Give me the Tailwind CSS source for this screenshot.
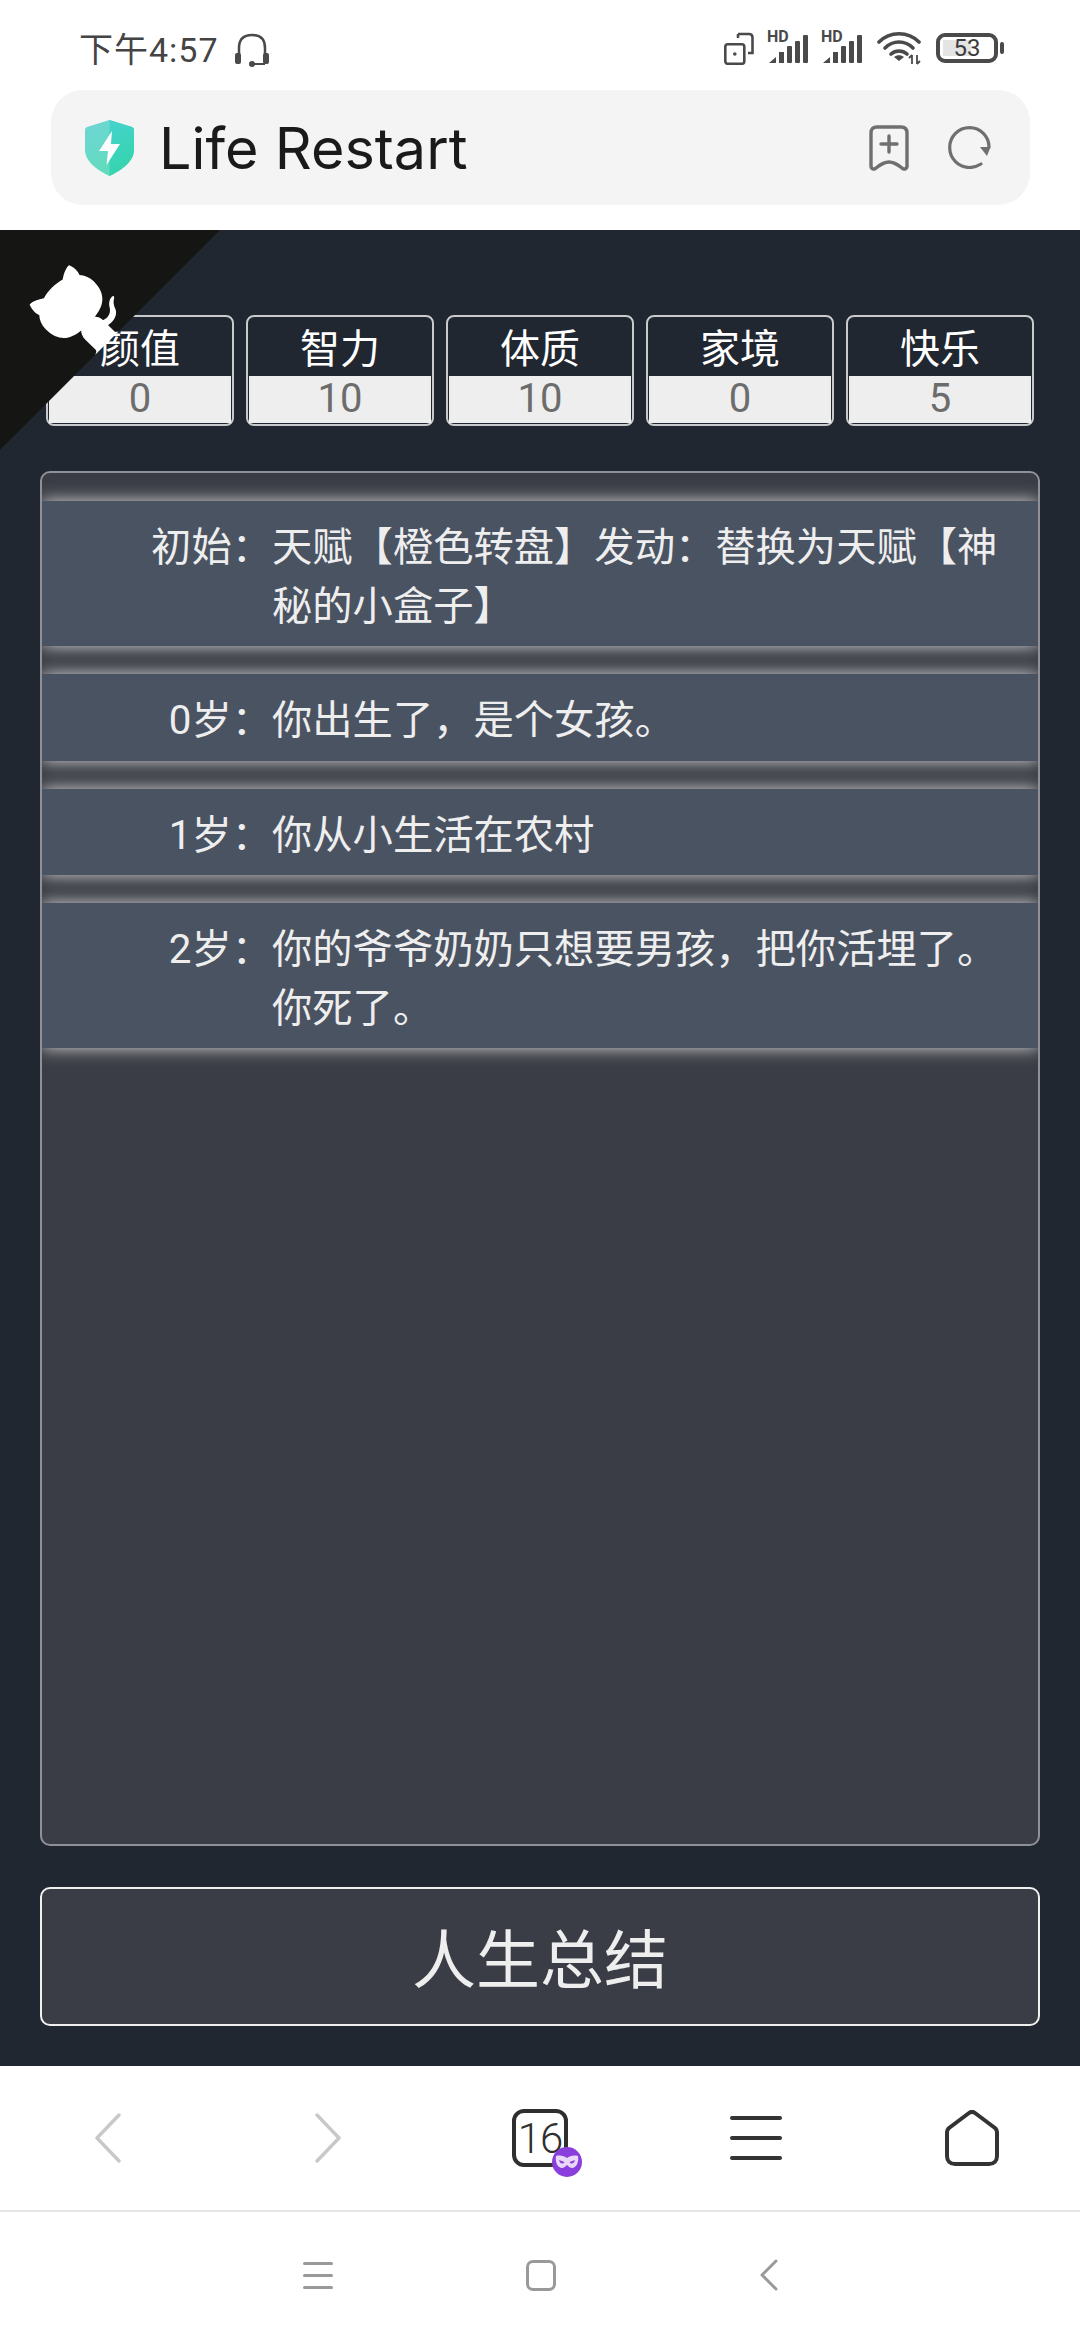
<!DOCTYPE html>
<html lang="zh-CN">
<head>
  <meta charset="UTF-8"/>
  <meta name="viewport" content="width=device-width, initial-scale=1.0"/>
  <title>Life Restart</title>
  <script src="https://cdn.jsdelivr.net/npm/@tailwindcss/browser@4"></script>
</head>
<body class="w-[1080px] h-[2340px] overflow-hidden bg-white flex flex-col font-['Roboto','Noto_Sans_CJK_SC',sans-serif]">

  <!-- Status bar + address bar -->
  <header class="h-[230px] shrink-0 flex flex-col">
    <div class="h-[90px] pl-[79px] pr-[76px] pt-[28px] flex items-start justify-between text-[#444444]">
      <div class="flex items-center gap-[15px] h-[40px] mt-[2px]">
        <span class="text-[34px] leading-[40px] tracking-[1px]">下午4:57</span>
        <svg class="w-[36px] h-[34px]" viewBox="0 0 36 34" fill="none" stroke="#4a4a4a" stroke-width="2.5">
          <path d="M5 22 V15 C5 6 10 2 18 2 C26 2 31 6 31 15 V22"/>
          <rect x="1" y="20" width="6" height="11" rx="2" fill="#4a4a4a" stroke="none"/>
          <rect x="29" y="20" width="6" height="11" rx="2" fill="#4a4a4a" stroke="none"/>
          <path d="M18 31 H31" stroke-width="2"/>
          <circle cx="18" cy="31" r="3" fill="#4a4a4a" stroke="none"/>
        </svg>
      </div>
      <div class="flex items-center gap-[13px] h-[40px]">
        <svg class="w-[30px] h-[33px]" viewBox="0 0 30 33" fill="none" stroke="#4a4a4a" stroke-width="2.6">
          <rect x="1.3" y="12.3" width="19" height="19.5" rx="2.5"/>
          <circle cx="10.8" cy="22" r="1.8" fill="#4a4a4a" stroke="none"/>
          <path d="M14 2 H25 C27.500 2 28.500 3 28.500 5.500 V21 H24"/>
          <path d="M14 2 V6"/>
        </svg>
        <div class="relative w-[41px] h-[32px]">
          <span class="absolute left-0 top-[-2px] text-[16px] leading-[14px] font-bold text-[#4a4a4a]">HD</span>
          <svg class="absolute inset-0 w-[41px] h-[32px]" viewBox="0 0 41 32" fill="#4a4a4a">
            <path d="M2 31 L9 25 V31 Z"/><rect x="12" y="20" width="5" height="11"/><rect x="20" y="14" width="5" height="17" rx="1"/><rect x="28" y="9" width="5" height="22" rx="1"/><rect x="36" y="3" width="5" height="28" rx="1"/>
          </svg>
        </div>
        <div class="relative w-[41px] h-[32px]">
          <span class="absolute left-0 top-[-2px] text-[16px] leading-[14px] font-bold text-[#4a4a4a]">HD</span>
          <svg class="absolute inset-0 w-[41px] h-[32px]" viewBox="0 0 41 32" fill="#4a4a4a">
            <path d="M2 31 L9 25 V31 Z"/><rect x="12" y="20" width="5" height="11"/><rect x="20" y="14" width="5" height="17" rx="1"/><rect x="28" y="9" width="5" height="22" rx="1"/><rect x="36" y="3" width="5" height="28" rx="1"/>
          </svg>
        </div>
        <svg class="ml-[2px] w-[44px] h-[34px]" viewBox="0 0 44 34" fill="none" stroke="#4a4a4a" stroke-width="3.6" stroke-linecap="round">
          <path d="M2 11 C13 0 31 0 42 11"/>
          <path d="M8 17 C16 9 28 9 36 17"/>
          <path d="M14 23 C18.500 19 25.500 19 30 23"/>
          <path d="M17 26 L22 30 L27 26 C24 23.500 20 23.500 17 26 Z" fill="#4a4a4a" stroke="none"/>
          <path d="M35 24 V33 M32 27 L35 24 M40 24 V33 M40 33 L43 30" stroke-width="1.8" stroke-linecap="butt"/>
        </svg>
        <div class="flex items-center gap-[2px] ml-[2px]">
          <div class="relative w-[62px] h-[30px] rounded-[9px] border-[4px] border-[#4a4a4a]">
            <div class="absolute left-[3px] top-[3px] bottom-[3px] w-[28px] bg-[#e4e4e4]"></div>
            <span class="absolute inset-0 flex items-center justify-center text-[24px] leading-none text-[#3c3c3c]">53</span>
          </div>
          <div class="w-[4px] h-[12px] rounded-[2px] bg-[#4a4a4a]"></div>
        </div>
      </div>
    </div>
    <div class="mx-[51px] w-[979px] h-[115px] rounded-[32px] bg-[#f4f4f4] flex items-center pl-[34px] pr-[39px]">
      <svg class="w-[49px] h-[56px] mt-[1px]" viewBox="0 0 49 56">
        <defs>
          <linearGradient id="shieldLeft" x1="0" y1="0" x2="0.6" y2="1"><stop offset="0" stop-color="#6fd6d8"/><stop offset="1" stop-color="#5fdcb8"/></linearGradient>
          <linearGradient id="shieldRight" x1="0" y1="0" x2="0.3" y2="1"><stop offset="0" stop-color="#46d3cf"/><stop offset="1" stop-color="#35d4ac"/></linearGradient>
        </defs>
        <path d="M24.500 0 L47 7 C48 7.300 49 8.500 49 10 V30 C49 42 35 51 24.500 56 C14 51 0 42 0 30 V10 C0 8.500 1 7.300 2 7 Z" fill="url(#shieldLeft)"/>
        <path d="M24.500 0 L47 7 C48 7.300 49 8.500 49 10 V30 C49 42 35 51 24.500 56 Z" fill="url(#shieldRight)"/>
        <path d="M27 11 L14 31 H23 L21.500 45 L35 24 H26 Z" fill="#fff"/>
      </svg>
      <span class="ml-[25px] mt-[2px] text-[57.500px] leading-none text-[#1a1a1a] font-['Inter',sans-serif]">Life Restart</span>
      <svg class="ml-auto w-[40px] h-[46px]" viewBox="0 0 40 46" fill="none" stroke="#6f6f6f" stroke-width="3.4" stroke-linecap="round" stroke-linejoin="round">
        <path d="M2 8 C2 4 4 2 8 2 H32 C36 2 38 4 38 8 V41 C38 44 35 45 33 43 C28 39 24 37 20 37 C16 37 12 39 7 43 C5 45 2 44 2 41 Z"/>
        <path d="M20 11 V27 M12 19 H28"/>
      </svg>
      <svg class="ml-[39px] w-[43px] h-[43px]" viewBox="0 0 43 43" fill="none" stroke="#6f6f6f" stroke-width="3.2" stroke-linecap="round">
        <path d="M33 38 C29 40.500 25.500 41.500 21.500 41.500 C10.500 41.500 1.700 32.500 1.700 21.500 C1.700 10.500 10.500 1.700 21.500 1.700 C32.500 1.700 41 10.500 41 21"/>
        <path d="M32 21 L42.500 21 L39 30 Z" fill="#6f6f6f" stroke="none"/>
      </svg>
    </div>
  </header>

  <!-- Game area -->
  <main class="relative flex-1 bg-[#212730] flex flex-col pt-[85px] pb-[40px]">
    <svg class="absolute left-0 top-0 w-[220px] h-[220px] -scale-x-100 z-10" viewBox="0 0 250 250" fill="#151513">
      <path d="M0,0 L115,115 L130,115 L142,142 L250,250 L250,0 Z"/>
      <path d="M128.3,109.0 C113.8,99.7 119.0,89.6 119.0,89.6 C122.0,82.7 120.5,78.6 120.5,78.6 C119.2,72.0 123.4,76.3 123.4,76.3 C127.3,80.9 125.5,87.3 125.5,87.3 C122.9,97.6 130.6,101.9 134.4,103.2" fill="#fff"/>
      <path d="M115.0,115.0 C114.9,115.1 118.7,116.5 119.8,115.4 L133.7,101.6 C136.9,99.2 139.9,98.4 142.2,98.6 C133.8,88.0 127.5,74.4 143.8,58.0 C148.5,53.4 154.0,51.2 159.7,51.0 C160.3,49.4 163.2,43.6 171.4,40.1 C171.4,40.1 176.1,42.5 178.8,56.2 C183.1,58.6 187.2,61.8 190.9,65.4 C194.5,69.0 197.7,73.2 200.1,77.6 C213.8,80.2 216.3,84.9 216.3,84.9 C212.7,93.1 206.9,96.0 205.4,96.6 C205.1,102.4 203.0,107.8 198.3,112.5 C181.9,128.9 168.3,122.5 157.7,114.1 C157.9,116.9 156.7,120.9 152.7,124.9 L141.0,136.5 C139.8,137.7 141.6,141.9 141.8,141.8 Z" fill="#fff"/>
    </svg>

    <!-- Stats -->
    <ul class="mx-[46px] grid grid-cols-5 gap-[12px] h-[111px]">
      <li class="rounded-[8px] border-2 border-[#c9cacc] p-[1px] flex flex-col text-center">
        <span class="h-[58px] text-[40px] leading-[63px] text-white">颜值</span>
        <span class="flex-1 bg-[#eeeeee] text-[40px] leading-[46px] text-[#6c6c6c]">0</span>
      </li>
      <li class="rounded-[8px] border-2 border-[#c9cacc] p-[1px] flex flex-col text-center">
        <span class="h-[58px] text-[40px] leading-[63px] text-white">智力</span>
        <span class="flex-1 bg-[#eeeeee] text-[40px] leading-[46px] text-[#6c6c6c]">10</span>
      </li>
      <li class="rounded-[8px] border-2 border-[#c9cacc] p-[1px] flex flex-col text-center">
        <span class="h-[58px] text-[40px] leading-[63px] text-white">体质</span>
        <span class="flex-1 bg-[#eeeeee] text-[40px] leading-[46px] text-[#6c6c6c]">10</span>
      </li>
      <li class="rounded-[8px] border-2 border-[#c9cacc] p-[1px] flex flex-col text-center">
        <span class="h-[58px] text-[40px] leading-[63px] text-white">家境</span>
        <span class="flex-1 bg-[#eeeeee] text-[40px] leading-[46px] text-[#6c6c6c]">0</span>
      </li>
      <li class="rounded-[8px] border-2 border-[#c9cacc] p-[1px] flex flex-col text-center">
        <span class="h-[58px] text-[40px] leading-[63px] text-white">快乐</span>
        <span class="flex-1 bg-[#eeeeee] text-[40px] leading-[46px] text-[#6c6c6c]">5</span>
      </li>
    </ul>

    <!-- Trajectory -->
    <ul class="mx-[40px] mt-[45px] h-[1375px] rounded-[10px] border-2 border-[#8f9196] bg-[#3a3d45] overflow-hidden pt-[28px] flex flex-col gap-[28px] text-[40.3px] leading-[58.500px] text-[#eeeeee]">
      <li class="flex pt-[18px] pb-[10px] pr-[20px] bg-[#4a5362] shadow-[0_0_16px_rgba(255,255,255,0.8)]">
        <span class="w-[230px] shrink-0 text-right">初始：</span>
        <span>天赋【橙色转盘】发动：替换为天赋【神秘的小盒子】</span>
      </li>
      <li class="flex pt-[18px] pb-[10px] pr-[20px] bg-[#4a5362] shadow-[0_0_16px_rgba(255,255,255,0.8)]">
        <span class="w-[230px] shrink-0 text-right">0岁：</span>
        <span>你出生了，是个女孩。</span>
      </li>
      <li class="flex pt-[18px] pb-[10px] pr-[20px] bg-[#4a5362] shadow-[0_0_16px_rgba(255,255,255,0.8)]">
        <span class="w-[230px] shrink-0 text-right">1岁：</span>
        <span>你从小生活在农村</span>
      </li>
      <li class="flex pt-[18px] pb-[10px] pr-[20px] bg-[#4a5362] shadow-[0_0_16px_rgba(255,255,255,0.8)]">
        <span class="w-[230px] shrink-0 text-right">2岁：</span>
        <span>你的爷爷奶奶只想要男孩，把你活埋了。<br/>你死了。</span>
      </li>
    </ul>

    <button class="mx-[40px] mt-[41px] h-[139px] pt-[10px] rounded-[10px] border-2 border-[#f0f0f0] bg-[#3a3d45] text-[64px] text-[#eeeeee]">人生总结</button>
  </main>

  <!-- Browser toolbar -->
  <nav class="h-[146px] shrink-0 grid grid-cols-5 items-center border-b-2 border-[#e6e6e6]">
    <svg class="justify-self-center w-[26px] h-[50px]" viewBox="0 0 26 50" fill="none" stroke="#c8c8c8" stroke-width="3.4" stroke-linecap="round" stroke-linejoin="round"><path d="M24 2 L2 25 L24 48"/></svg>
    <svg class="justify-self-center ml-[8px] w-[26px] h-[50px]" viewBox="0 0 26 50" fill="none" stroke="#c8c8c8" stroke-width="3.4" stroke-linecap="round" stroke-linejoin="round"><path d="M2 2 L24 25 L2 48"/></svg>
    <div class="justify-self-center relative w-[56px] h-[58px] rounded-[12px] border-[4px] border-[#2f2f2f] flex items-center justify-center text-[42px] font-light text-[#2f2f2f] tracking-[-1px]">
      16
      <svg class="absolute left-[36px] top-[34px] w-[30px] h-[30px]" viewBox="0 0 30 30">
        <circle cx="15" cy="15" r="15" fill="#8a3fdc"/>
        <path d="M4 9 C9 8 12 9 15 11 C18 9 21 8 26 9 C27 16 24 21 20 21 C18 21 16.500 19.500 15 18 C13.500 19.500 12 21 10 21 C6 21 3 16 4 9 Z" fill="#e9d8f8"/>
        <path d="M7 13 L12.500 15 C11 17.500 8 17 7 13 Z M23 13 L17.500 15 C19 17.500 22 17 23 13 Z" fill="#8a3fdc"/>
      </svg>
    </div>
    <div class="justify-self-center flex flex-col gap-[16px]">
      <div class="w-[52px] h-[4px] rounded-full bg-[#333333]"></div>
      <div class="w-[52px] h-[4px] rounded-full bg-[#333333]"></div>
      <div class="w-[52px] h-[4px] rounded-full bg-[#333333]"></div>
    </div>
    <svg class="justify-self-center w-[54px] h-[56px]" viewBox="0 0 54 56" fill="none" stroke="#333333" stroke-width="4" stroke-linejoin="round">
      <path d="M2 22 C2 20 3 19 4 18 L24 3 C26 1.500 28 1.500 30 3 L50 18 C51 19 52 20 52 22 V46 C52 51 49 54 44 54 H10 C5 54 2 51 2 46 Z"/>
    </svg>
  </nav>

  <!-- System navigation -->
  <div class="flex-1 flex items-center justify-center pb-[2px]">
    <div class="w-[30px] flex flex-col gap-[9px]">
      <div class="h-[3px] bg-[#999999] rounded-full"></div>
      <div class="h-[3px] bg-[#999999] rounded-full"></div>
      <div class="h-[3px] bg-[#999999] rounded-full"></div>
    </div>
    <div class="ml-[193px] w-[30px] h-[31px] rounded-[7px] border-[3px] border-[#999999]"></div>
    <svg class="ml-[204px] w-[18px] h-[32px]" viewBox="0 0 18 32" fill="none" stroke="#999999" stroke-width="3" stroke-linecap="round" stroke-linejoin="round"><path d="M16 2 L2 16 L16 30"/></svg>
  </div>
</body>
</html>
